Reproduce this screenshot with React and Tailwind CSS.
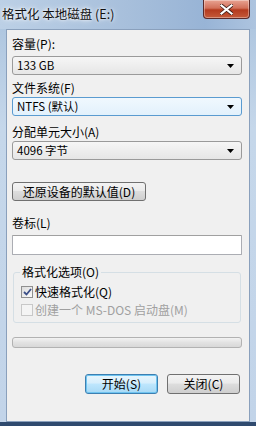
import React from "react";

const font = "font-['Noto_Sans_CJK_SC','Noto_Sans',sans-serif]";

function Arrow() {
  return (
    <svg width="7" height="4" viewBox="0 0 7 4" className="shrink-0">
      <path d="M0 0 H7 L3.5 4 Z" fill="#000" />
    </svg>
  );
}

function Select({ value, focused }) {
  return (
    <div
      className={
        "h-[19px] rounded-[3px] border flex items-center justify-between pl-[4px] pr-[7px] " +
        (focused
          ? "border-[#5a9bd0] bg-[linear-gradient(#f0f8fe,#e2f1fc)]"
          : "border-[#9a9a9a] bg-[linear-gradient(#f6f6f6,#e6e6e6)]")
      }
    >
      <span className="text-[11.5px] leading-none text-black">{value}</span>
      <Arrow />
    </div>
  );
}

function Label({ children, className = "" }) {
  return <div className={"text-[12px] leading-[14px] text-black " + className}>{children}</div>;
}

export default function App() {
  return (
    <div className={"w-[256px] h-[426px] flex flex-col overflow-hidden bg-[linear-gradient(180deg,#a9c2dd,#c5d7ea_30%,#c2d4e9)] " + font}>
      {/* title bar */}
      <div className="h-[29px] shrink-0 flex justify-between bg-[linear-gradient(90deg,#bcd0e6,#a7bfdb_50%,#98b4d6_80%,#adc4df)]">
        <div className="pl-[2px] pt-[6px] text-[12.5px] leading-[15px] text-[#111] [text-shadow:0_0_6px_#fff,0_0_3px_#fff]">
          格式化 本地磁盘 (E:)
        </div>
        <div className="mr-[6px] w-[47px] h-[19px] rounded-b-[4px] border border-t-0 border-[#5a2a2a] bg-[linear-gradient(#e8a393,#d2705a_45%,#b43a1e_55%,#c55a3a)] flex items-center justify-center shadow-[inset_0_0_0_1px_rgba(255,255,255,0.35)]">
          <svg width="13" height="11" viewBox="0 0 13 11">
            <path d="M1.5 1.5 L11.5 9.5 M11.5 1.5 L1.5 9.5" stroke="#3a1a14" strokeWidth="3.6" strokeLinecap="square" />
            <path d="M1.5 1.5 L11.5 9.5 M11.5 1.5 L1.5 9.5" stroke="#fff" strokeWidth="2.2" strokeLinecap="square" />
          </svg>
        </div>
      </div>

      {/* client area */}
      <div className="mx-[6px] h-[393px] shrink-0 border border-[#8aa0bc] bg-[#f0f0f0] pl-[5px] pr-[7px] pt-[7px] flex flex-col">
        <Label>容量(P):</Label>
        <div className="mt-[5px]">
          <Select value="133 GB" />
        </div>
        <Label className="mt-[6px]">文件系统(F)</Label>
        <div className="mt-[2px]">
          <Select value="NTFS (默认)" focused />
        </div>
        <Label className="mt-[9px]">分配单元大小(A)</Label>
        <div className="mt-[2px]">
          <Select value="4096 字节" />
        </div>

        <div className="mt-[22px] w-[134px] h-[19px] rounded-[3px] border border-[#707070] bg-[linear-gradient(#f3f3f3,#ebebeb_45%,#dddddd_50%,#cfcfcf)] flex items-center justify-center text-[12px] leading-none text-black">
          还原设备的默认值(D)
        </div>

        <Label className="mt-[15px]">卷标(L)</Label>
        <div className="mt-[5px] h-[20px] border border-[#abadb3] border-t-[#a0a0a0] bg-white rounded-[1px]" />

        {/* group box */}
        <div className="mt-[17px] relative mx-[1px] h-[51px] border border-[#d5dfe5] rounded-[3px]">
          <div className="absolute -top-[8px] left-[6px] px-[2px] bg-[#f0f0f0] text-[12px] leading-[14px] text-black">
            格式化选项(O)
          </div>
          <div className="pt-[13px] pl-[7px] flex flex-col gap-[6px]">
            <div className="flex items-center gap-[2px] h-[12px]">
              <div className="w-[12px] h-[12px] border border-[#8f8f8f] bg-[linear-gradient(135deg,#dcdcdc,#fafafa)] flex items-center justify-center">
                <svg width="9" height="8" viewBox="0 0 9 8">
                  <path d="M1 4 L3.5 6.5 L8 1" stroke="#3c4f88" strokeWidth="1.8" fill="none" />
                </svg>
              </div>
              <span className="text-[12px] leading-none text-black">快速格式化(Q)</span>
            </div>
            <div className="flex items-center gap-[2px] h-[12px]">
              <div className="w-[12px] h-[12px] border border-[#c8c8c8] bg-[#f4f4f4]" />
              <span className="text-[12px] leading-none text-[#a0a0a0]">创建一个 MS-DOS 启动盘(M)</span>
            </div>
          </div>
        </div>

        {/* progress */}
        <div className="mt-[14px] h-[11px] rounded-[3px] border border-[#b2b2b2] bg-[linear-gradient(#f3f3f3,#e2e2e2_50%,#d8d8d8)]" />

        {/* buttons */}
        <div className="mt-[26px] flex justify-end gap-[9px] pr-[2px]">
          <div className="w-[73px] h-[20px] rounded-[3px] border border-[#3c7fb1] bg-[linear-gradient(#e8f6fd,#d6eefc_45%,#bee6fd_50%,#a7d9f5)] shadow-[inset_0_0_0_1px_#6fc4f0] flex items-center justify-center text-[12px] leading-none text-black">
            开始(S)
          </div>
          <div className="w-[73px] h-[20px] rounded-[3px] border border-[#707070] bg-[linear-gradient(#f3f3f3,#ebebeb_45%,#dddddd_50%,#cfcfcf)] flex items-center justify-center text-[12px] leading-none text-black">
            关闭(C)
          </div>
        </div>
      </div>
      <div className="flex-1 bg-[#2f4a6e]" />
    </div>
  );
}
